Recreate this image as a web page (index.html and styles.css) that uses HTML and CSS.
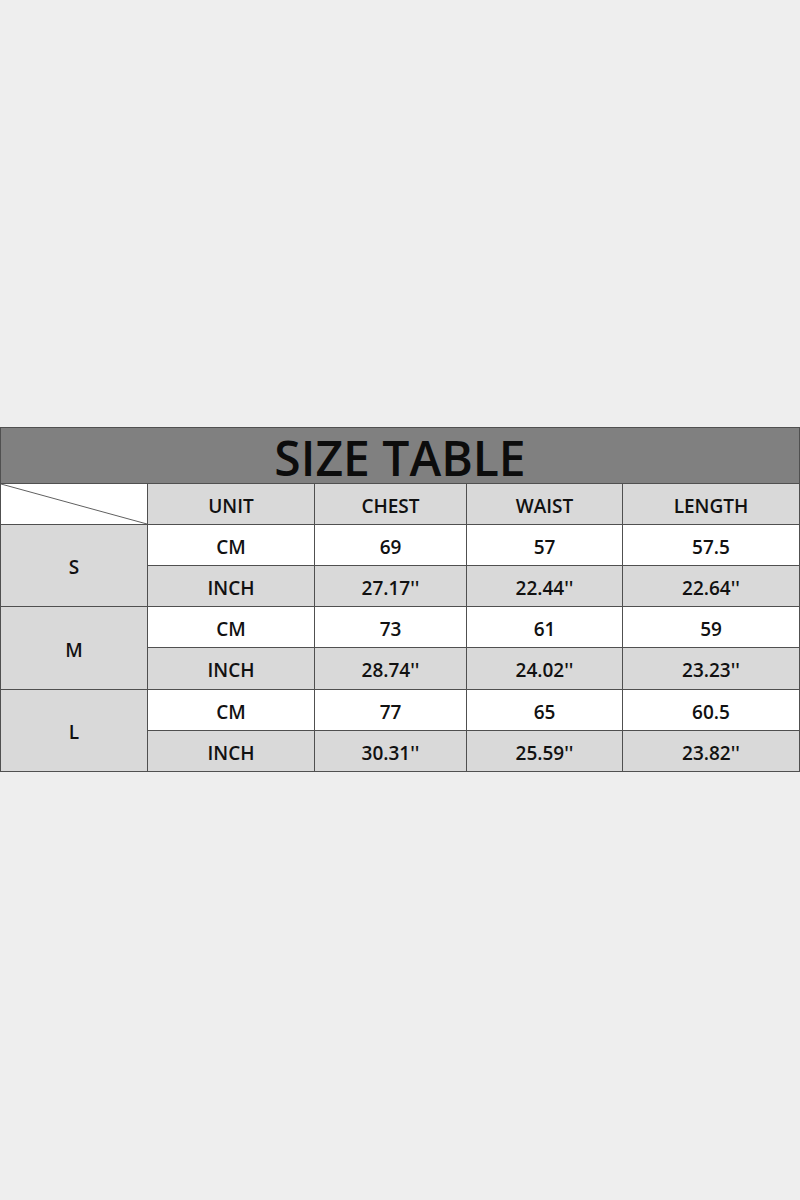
FILE: index.html
```html
<!DOCTYPE html>
<html>
<head>
<meta charset="utf-8">
<link rel="stylesheet" href="styles.css">
</head>
<body>
<div class="page">
  <div class="table">
    <div class="title">SIZE TABLE</div>
    <div class="corner"><svg class="diag" viewBox="0 0 100 100" preserveAspectRatio="none"><line x1="0" y1="0" x2="100" y2="100" vector-effect="non-scaling-stroke"/></svg></div>
    <div class="cell gray">UNIT</div>
    <div class="cell gray">CHEST</div>
    <div class="cell gray">WAIST</div>
    <div class="cell gray">LENGTH</div>

    <div class="cell gray size">S</div>
    <div class="cell">CM</div><div class="cell">69</div><div class="cell">57</div><div class="cell">57.5</div>
    <div class="cell gray">INCH</div><div class="cell gray">27.17''</div><div class="cell gray">22.44''</div><div class="cell gray">22.64''</div>

    <div class="cell gray size">M</div>
    <div class="cell">CM</div><div class="cell">73</div><div class="cell">61</div><div class="cell">59</div>
    <div class="cell gray">INCH</div><div class="cell gray">28.74''</div><div class="cell gray">24.02''</div><div class="cell gray">23.23''</div>

    <div class="cell gray size">L</div>
    <div class="cell">CM</div><div class="cell">77</div><div class="cell">65</div><div class="cell">60.5</div>
    <div class="cell gray">INCH</div><div class="cell gray">30.31''</div><div class="cell gray">25.59''</div><div class="cell gray">23.82''</div>
  </div>
</div>
</body>
</html>
```
FILE: styles.css
```css
html, body {
  margin: 0;
  padding: 0;
  background: #eeeeee;
}
.page {
  width: 800px;
  height: 1200px;
  padding-top: 427px;
  box-sizing: border-box;
}
.table {
  display: grid;
  grid-template-columns: 146px 166px 151px 155px 176px;
  grid-template-rows: 55px 40px 40px 40px 40px 41px 40px 40px;
  gap: 1px;
  padding: 1px;
  background: #505050;
  width: 800px;
  box-sizing: border-box;
  font-family: "Open Sans", "Liberation Sans", sans-serif;
  color: #111111;
}
.title {
  grid-column: 1 / -1;
  background: #808080;
  display: flex;
  align-items: center;
  justify-content: center;
  font-size: 48px;
  font-weight: 600;
  color: #0c0c0c;
  padding-top: 4px;
}
.corner {
  background: #ffffff;
}
.diag {
  display: block;
  width: 100%;
  height: 100%;
}
.diag line {
  stroke: #606060;
  stroke-width: 1;
}
.cell {
  background: #ffffff;
  display: flex;
  align-items: center;
  justify-content: center;
  font-size: 19px;
  font-weight: 600;
  padding-top: 3px;
  box-sizing: border-box;
}
.gray {
  background: #d9d9d9;
}
.size {
  grid-row: span 2;
}
```
